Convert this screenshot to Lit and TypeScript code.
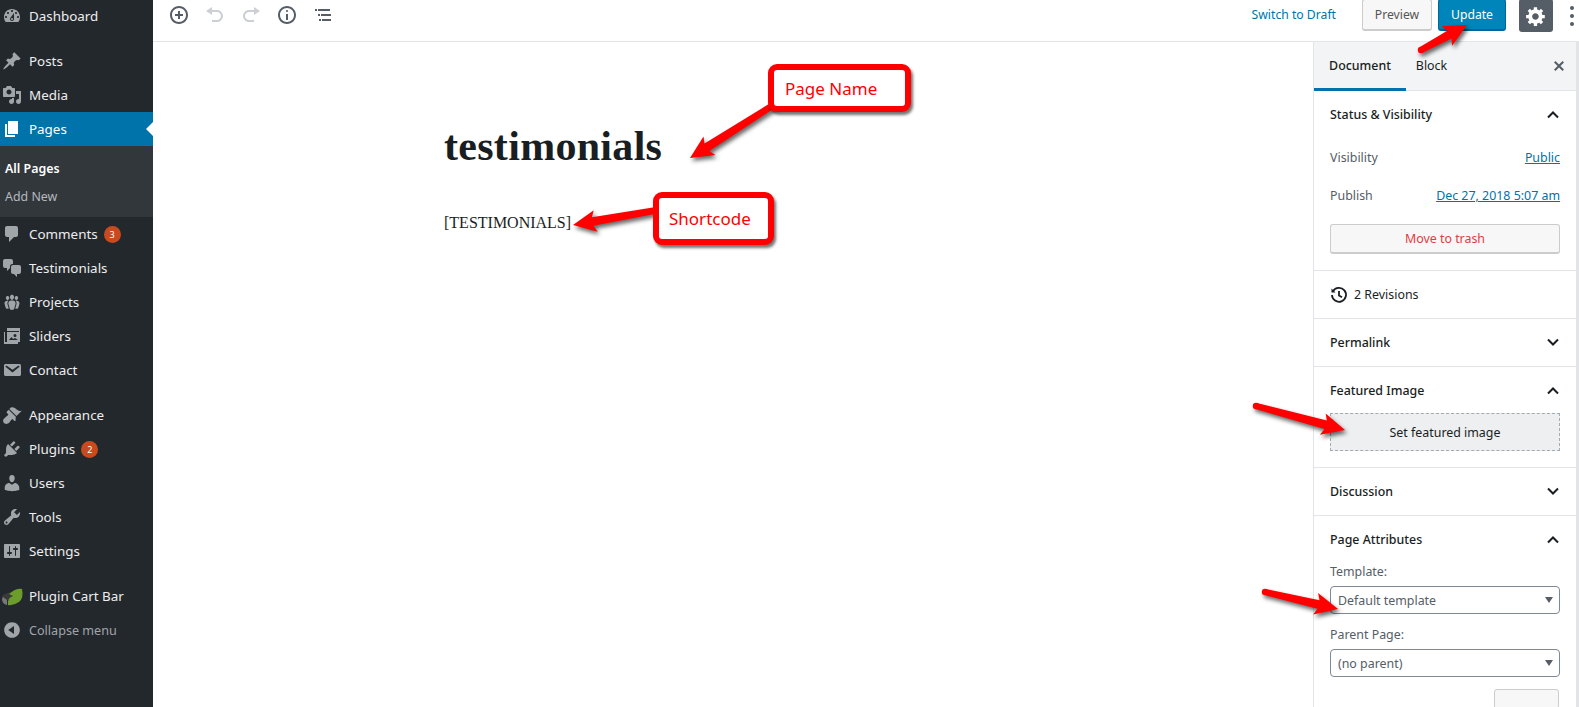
import { LitElement, html, css, svg } from "lit";
import { customElement } from "lit/decorators.js";

const P: Record<string, string> = {
  dashboard: "M3.76 16h12.48c1.1-1.37 1.76-3.11 1.76-5 0-4.42-3.58-8-8-8s-8 3.58-8 8c0 1.89.66 3.63 1.76 5zM10 4c.55 0 1 .45 1 1s-.45 1-1 1-1-.45-1-1 .45-1 1-1zM6 6c.55 0 1 .45 1 1s-.45 1-1 1-1-.45-1-1 .45-1 1-1zm8 0c.55 0 1 .45 1 1s-.45 1-1 1-1-.45-1-1 .45-1 1-1zm-5.37 5.55L12 7v6c0 1.1-.9 2-2 2s-2-.9-2-2c0-.57.24-1.08.63-1.45zM4 10c.55 0 1 .45 1 1s-.45 1-1 1-1-.45-1-1 .45-1 1-1zm12 0c.55 0 1 .45 1 1s-.45 1-1 1-1-.45-1-1 .45-1 1-1zm-5 3c0-.55-.45-1-1-1s-1 .45-1 1 .45 1 1 1 1-.45 1-1z",
  post: "M10.44 3.02l1.82-1.82 6.36 6.35-1.83 1.82c-1.05-.68-2.48-.57-3.41.36l-.75.75c-.92.93-1.04 2.35-.35 3.41l-1.83 1.82-2.41-2.41-2.8 2.79c-.42.42-3.38 2.71-3.8 2.29s1.86-3.39 2.28-3.81l2.79-2.79L4.1 9.36l1.83-1.82c1.05.69 2.48.57 3.4-.36l.75-.75c.93-.92 1.05-2.35.36-3.41z",
  media: "M13 11V4c0-.55-.45-1-1-1h-1.67L9 1H5L3.67 3H2c-.55 0-1 .45-1 1v7c0 .55.45 1 1 1h10c.55 0 1-.45 1-1zM7 4.5c1.38 0 2.5 1.12 2.5 2.5S8.38 9.5 7 9.5 4.5 8.38 4.5 7 5.62 4.5 7 4.5zM14 6h5v10.5c0 1.38-1.12 2.5-2.5 2.5S14 17.88 14 16.5s1.12-2.5 2.5-2.5c.17 0 .34.02.5.05V9h-3V6zm-4 8.05V13h2v3.5c0 1.38-1.12 2.5-2.5 2.5S7 17.88 7 16.5 8.12 14 9.5 14c.17 0 .34.02.5.05z",
  page: "M6 15V2h10v13H6zm-1 1h8v2H3V5h2v11z",
  comment: "M5 2h9c1.1 0 2 .9 2 2v7c0 1.1-.9 2-2 2h-2l-5 5v-5H5c-1.1 0-2-.9-2-2V4c0-1.1.9-2 2-2z",
  chat: "M11 6h-.82C9.07 6 8 7.2 8 8.16V10l-3 3v-3H3c-1.1 0-2-.9-2-2V3c0-1.1.9-2 2-2h6c1.1 0 2 .9 2 2v3zm0 1h6c1.1 0 2 .9 2 2v5c0 1.1-.9 2-2 2h-2v3l-3-3h-1c-1.1 0-2-.9-2-2V9c0-1.1.9-2 2-2z",
  groups: "M8.03 4.46c-.29 1.28.55 3.46 1.97 3.46 1.41 0 2.25-2.18 1.96-3.46-.22-.98-1.08-1.63-1.96-1.63-.89 0-1.74.65-1.97 1.63zm-4.13.9c-.25 1.08.47 2.93 1.67 2.93s1.92-1.85 1.67-2.93c-.19-.83-.92-1.39-1.67-1.39s-1.48.56-1.67 1.39zm8.86 0c-.25 1.08.47 2.93 1.66 2.93 1.2 0 1.92-1.85 1.67-2.93-.19-.83-.92-1.39-1.67-1.39-.74 0-1.47.56-1.66 1.39zm-.59 11.43l1.25-4.3C14.2 10 12.71 8.47 10 8.47c-2.72 0-4.21 1.53-3.44 4.02l1.26 4.3C8.05 17.51 9 18 10 18c.98 0 1.94-.49 2.17-1.21zm-6.1-7.63c-.49.67-.96 1.83-.42 3.59l1.12 3.79c-.34.2-.77.31-1.2.31-.85 0-1.65-.41-1.85-1.03l-1.07-3.65c-.65-2.11.61-3.4 2.92-3.4.27 0 .54.02.79.06-.1.1-.2.22-.29.33zm8.35-.39c2.31 0 3.58 1.29 2.92 3.4l-1.07 3.65c-.2.62-1 1.03-1.85 1.03-.43 0-.86-.11-1.2-.31l1.11-3.79c.55-1.76.08-2.92-.42-3.59-.09-.11-.19-.23-.28-.33.25-.04.51-.06.79-.06z",
  slides: "M5 2h13v11h-1V5H5V2zM2 6h1v10h13v2H2V6zm3 0h13v10H5V6zm8 2a1.5 1.5 0 1 0 0 3 1.5 1.5 0 0 0 0-3zM7 14h9l-3-2-2 1-1.5-2z",
  email: "M3.87 4h13.25C18.37 4 19 4.59 19 5.79v8.42c0 1.19-.63 1.79-1.88 1.79H3.87c-1.25 0-1.88-.6-1.88-1.79V5.79c0-1.2.63-1.79 1.88-1.79zm6.62 8.6l6.74-5.53c.24-.2.43-.66.13-1.07-.29-.41-.82-.42-1.17-.17l-5.7 3.86L4.8 5.83c-.35-.25-.88-.24-1.17.17-.3.41-.11.87.13 1.07z",
  appearance: "M14.48 11.06L7.41 3.99l1.5-1.5c.5-.56 2.3-.47 3.51.32 1.21.8 1.43 1.28 2.91 2.1 1.18.64 2.45 1.26 4.45.85zm-.71.71L6.7 4.7 4.93 6.47c-.39.39-.39 1.02 0 1.41l1.06 1.06c.39.39.39 1.03 0 1.42-.6.6-1.43 1.11-2.21 1.69-.35.26-.7.53-1.01.84C1.43 13.71.96 15.18 1.2 16.4c.07.4.21.79.43 1.15.63 1.03 1.69 1.34 2.71 1.35.92.01 1.97-.26 2.77-1.06.31-.31.58-.66.84-1.01.58-.78 1.09-1.61 1.69-2.21.39-.39 1.03-.39 1.42 0l1.06 1.06c.39.39 1.02.39 1.41 0z",
  plugins: "M13.11 4.36L9.87 7.6 8 5.73l3.24-3.24c.35-.34 1.05-.2 1.56.32.52.51.66 1.21.31 1.55zm-8 1.77l.91-1.12 9.01 9.01-1.19.84c-.71.71-2.63 1.16-3.82 1.16H6.14L4.9 17.26c-.59.59-1.54.59-2.12 0-.59-.58-.59-1.53 0-2.12l1.24-1.24v-3.88c0-1.13.4-3.19 1.09-3.89zm7.26 3.97l3.24-3.24c.34-.35 1.04-.21 1.55.31.52.51.66 1.21.31 1.55l-3.24 3.25z",
  users: "M10 9.25c-2.27 0-2.73-3.44-2.73-3.44C7 4.02 7.82 2 9.97 2c2.16 0 2.98 2.02 2.71 3.81 0 0-.41 3.44-2.68 3.44zm0 2.57L12.72 10c2.39 0 4.52 2.33 4.52 4.53v2.49s-3.65 1.13-7.24 1.13c-3.65 0-7.24-1.13-7.24-1.13v-2.49c0-2.25 1.94-4.48 4.47-4.48z",
  tools: "M16.68 9.77c-1.34 1.34-3.3 1.67-4.95.99l-5.41 6.52c-.99.99-2.59.99-3.58 0s-.99-2.59 0-3.57l6.52-5.42c-.68-1.65-.35-3.61.99-4.95 1.28-1.28 3.12-1.62 4.72-1.06l-2.89 2.89 2.82 2.82 2.86-2.87c.53 1.58.18 3.39-1.08 4.67zM3.81 16.21c.4.39 1.04.39 1.43 0 .4-.4.4-1.04 0-1.43-.39-.4-1.03-.4-1.43 0-.39.39-.39 1.03 0 1.43z",
  settings: "M18 16V4c0-.55-.45-1-1-1H3c-.55 0-1 .45-1 1v12c0 .55.45 1 1 1h14c.55 0 1-.45 1-1zM8 11h1c.55 0 1 .45 1 1s-.45 1-1 1H8v1.5c0 .28-.22.5-.5.5s-.5-.22-.5-.5V13H6c-.55 0-1-.45-1-1s.45-1 1-1h1V5.5c0-.28.22-.5.5-.5s.5.22.5.5V11zm5-2h-1c-.55 0-1-.45-1-1s.45-1 1-1h1V5.5c0-.28.22-.5.5-.5s.5.22.5.5V7h1c.55 0 1 .45 1 1s-.45 1-1 1h-1v5.5c0 .28-.22.5-.5.5s-.5-.22-.5-.5V9z",
  collapse: "M10 2.16c4.33 0 7.84 3.51 7.84 7.84s-3.51 7.84-7.84 7.84S2.16 14.33 2.16 10 5.71 2.16 10 2.16zm2 11.72V6.12L6.18 9.97z",
  inserter: "M10 1c-5 0-9 4-9 9s4 9 9 9 9-4 9-9-4-9-9-9zm0 16c-3.9 0-7-3.1-7-7s3.1-7 7-7 7 3.1 7 7-3.1 7-7 7zm1-11H9v3H6v2h3v3h2v-3h3V9h-3V6z",
  undo: "M12 5H7V2L1 6l6 4V7h5c2.2 0 4 1.8 4 4s-1.8 4-4 4H7v2h5c3.3 0 6-2.7 6-6s-2.7-6-6-6z",
  redo: "M8 5h5V2l6 4-6 4V7H8c-2.2 0-4 1.8-4 4s1.8 4 4 4h5v2H8c-3.3 0-6-2.7-6-6s2.7-6 6-6z",
  info: "M9 15h2V9H9v6zm1-10c-.5 0-1 .5-1 1s.5 1 1 1 1-.5 1-1-.5-1-1-1zm0-4c-5 0-9 4-9 9s4 9 9 9 9-4 9-9-4-9-9-9zm0 16c-3.9 0-7-3.1-7-7s3.1-7 7-7 7 3.1 7 7-3.1 7-7 7z",
  toc: "M2 4h2v2H2zM5 4h12v2H5zM5 9h2v2H5zM8 9h10v2H8zM6 14h2v2H6zM9 14h9v2H9z",
  gear: "M18 12h-2.18c-.17.7-.44 1.35-.81 1.93l1.54 1.54-2.1 2.1-1.54-1.54c-.58.36-1.23.63-1.91.79V19H8v-2.18c-.68-.16-1.33-.43-1.91-.79l-1.54 1.54-2.12-2.12 1.54-1.54c-.36-.58-.63-1.23-.79-1.91H1V9.03h2.17c.16-.7.44-1.35.8-1.94L2.43 5.55l2.1-2.1 1.54 1.54c.58-.37 1.24-.64 1.93-.81V2h3v2.18c.68.16 1.33.43 1.91.79l1.54-1.54 2.12 2.12-1.54 1.54c.36.59.64 1.24.8 1.94H18V12zm-8.5 1.5c1.66 0 3-1.34 3-3s-1.34-3-3-3-3 1.34-3 3 1.34 3 3 3z",
  close: "M14.95 6.46L11.41 10l3.54 3.54-1.41 1.41L10 11.41l-3.54 3.54-1.41-1.41L8.59 10 5.05 6.46l1.41-1.41L10 8.59l3.54-3.54z",
};

const ico = (name: string, size = 20) => html`<svg class="i" width=${size} height=${size} viewBox="0 0 20 20" fill="currentColor"><path d=${P[name]}></path></svg>`;

type Item = { label: string; icon: string; badge?: number; sepBefore?: boolean };
const itemsA: Item[] = [
  { label: "Posts", icon: "post", sepBefore: true },
  { label: "Media", icon: "media" },
];
const itemsB: Item[] = [
  { label: "Comments", icon: "comment", badge: 3 },
  { label: "Testimonials", icon: "chat" },
  { label: "Projects", icon: "groups" },
  { label: "Sliders", icon: "slides" },
  { label: "Contact", icon: "email" },
  { label: "Appearance", icon: "appearance", sepBefore: true },
  { label: "Plugins", icon: "plugins", badge: 2 },
  { label: "Users", icon: "users" },
  { label: "Tools", icon: "tools" },
  { label: "Settings", icon: "settings" },
];

function arrow(x1: number, y1: number, x2: number, y2: number) {
  const a = Math.atan2(y2 - y1, x2 - x1);
  const c = Math.cos(a), s = Math.sin(a);
  const at = (d: number, w: number) => `${x2 - c * d - s * w},${y2 - s * d + c * w}`;
  const len = 20, hw = 11;
  const tail = 3.2, neck = 4.4;
  const sx = x1, sy = y1;
  const pts = [
    at(0, 0), at(len + 3, hw), at(len, neck),
    `${sx - s * tail},${sy + c * tail}`, `${sx + s * tail},${sy - c * tail}`,
    at(len, -neck), at(len + 3, -hw),
  ].join(" ");
  return svg`<circle cx=${sx} cy=${sy} r=${tail} fill="#f00"></circle><polygon points=${pts} fill="#f00"></polygon>`;
}

@customElement("app-root")
export class AppRoot extends LitElement {
  static styles = css`
    :host { display: block; height: 707px; overflow: hidden; position: relative; background: #fff; font-family: "Noto Sans", "Open Sans", sans-serif; font-size: 13px; color: #191e23; }
    * { box-sizing: border-box; }
    .i { display: block; flex: none; }
    .shell { display: grid; grid-template-columns: 153px 1fr; height: 707px; }

    .side { background: #23282d; color: #eee; margin-top: -1px; height: 708px; font-size: 13.4px; }
    .item { display: flex; align-items: center; height: 34px; position: relative; }
    .item.sep { margin-top: 11px; }
    .item .ic { width: 29px; padding-left: 2px; color: #a0a5aa; flex: none; }
    .item.cur { background: #0073aa; color: #fff; }
    .item.cur .ic { color: #fff; }
    .item.cur::after { content: ""; position: absolute; right: 0; top: 10px; border: 7px solid transparent; border-right-color: #fff; border-left: 0; }
    .sub { background: #32373c; height: 71px; padding: 9px 0 0 5px; font-size: 12.4px; color: #b4b9be; }
    .sub div { height: 28px; line-height: 28px; }
    .sub .on { color: #fff; font-weight: 600; }
    .badge { width: 17px; height: 17px; border-radius: 50%; background: #ca4a1f; color: #fff; font-size: 9px; display: flex; align-items: center; justify-content: center; margin-left: 6px; }
    .muted { color: #a0a5aa; font-size: 12.6px; }
    .muted .ic { color: #a0a5aa; }

    .main { display: flex; flex-direction: column; min-width: 0; height: 707px; }
    .top { height: 43px; flex: none; border-bottom: 1px solid #e2e4e7; display: flex; align-items: flex-start; padding-left: 16px; margin-top: -1px; }
    .tools { display: flex; align-items: center; height: 32px; color: #555d66; gap: 16px; }
    .tools .off { color: #ccd0d4; }
    .tools .i { width: 20px; height: 20px; }
    .right { margin-left: auto; display: flex; align-items: flex-start; }
    .draft { color: #0073aa; font-size: 12.2px; line-height: 32px; margin-right: 26px; }
    .btn { height: 32px; display: flex; align-items: center; justify-content: center; border-radius: 3px; font-size: 12.2px; }
    .preview { width: 70px; margin-right: 6px; border: 1px solid #ccc; border-bottom-width: 2px; background: #f7f7f7; color: #555; }
    .update { width: 68px; background: #0085ba; color: #fff; border: 1px solid #006799; border-bottom-width: 2px; margin-right: 13px; }
    .gear { width: 34px; height: 33px; background: #555d66; color: #fff; margin-right: 12px; }
    .dots { width: 14px; display: flex; flex-direction: column; gap: 4px; padding-top: 7px; align-items: center; margin-right: 0; }
    .dots i { width: 4px; height: 4px; border-radius: 50%; background: #555d66; display: block; }

    .body { flex: 1; display: flex; min-height: 0; }
    .doc { flex: 1; min-width: 0; padding: 0 0 0 291px; }
    .doc h1 { margin: 77px 0 0; font: 700 42px/54px "Liberation Serif", serif; color: #191e23; letter-spacing: .3px; }
    .doc p { margin: 38px 0 0; font: 16px/24px "Liberation Serif", serif; color: #191e23; }

    .panel { width: 266px; flex: none; border-left: 1px solid #e2e4e7; border-right: 3px solid #e2e4e7; overflow: hidden; }
    .tabs { height: 49px; background: #f3f4f5; border-bottom: 1px solid #e2e4e7; display: flex; align-items: stretch; position: relative; }
    .tab { display: flex; align-items: center; justify-content: center; font-size: 12.4px; padding-bottom: 2px; }
    .tab.on { width: 92px; border-bottom: 3px solid #0073aa; font-weight: 500; padding-bottom: 0; margin-bottom: -1px; }
    .tab.off { width: 47px; margin-left: 0; padding-left: 4px; }
    .x { margin-left: auto; margin-right: 7px; align-self: center; color: #555d66; }
    .sec { border-bottom: 1px solid #e2e4e7; padding: 0 16px; }
    .head { display: flex; align-items: center; justify-content: space-between; height: 47px; font-weight: 500; font-size: 12.4px; }
    .head svg { flex: none; }
    .row { display: flex; justify-content: space-between; align-items: center; height: 38px; color: #555d66; font-size: 12.4px; }
    .row a { color: #0073aa; text-decoration: underline; }
    .trash { height: 30px; margin-top: 10px; margin-bottom: 16px; border: 1px solid #ccc; border-bottom-width: 2px; border-radius: 3px; background: #f7f7f7; color: #d9423f; font-size: 12.4px; display: flex; align-items: center; justify-content: center; }
    .rev { height: 47px; display: flex; align-items: center; gap: 6px; font-size: 12.4px; }
    .feat { height: 38px; margin-bottom: 16px; background: #edeff0; border: 1px dashed #a2aab2; display: flex; align-items: center; justify-content: center; font-size: 12.4px; margin-top: -1px; }
    .lab { color: #555d66; font-size: 12.4px; line-height: 18px; }
    .sel { height: 28px; margin: 5px 0 12px; width: 230px; border: 1px solid #7e8993; border-radius: 4px; display: flex; align-items: center; justify-content: space-between; padding: 0 6px 0 7px; color: #555d66; font-size: 12.4px; }
    .sel i { width: 0; height: 0; border: 4px solid transparent; border-top: 6px solid #555d66; border-bottom: 0; }
    .small { width: 65px; height: 20px; margin: 10px 0 0 164px; border: 1px solid #ccc; border-radius: 3px; background: #f7f7f7; }

    .layer { position: absolute; inset: 0; pointer-events: none; }
    .layer svg { position: absolute; left: 0; top: 0; filter: drop-shadow(2px 3px 2px rgba(0,0,0,.6)); }
    .call { position: absolute; background: #fff; border: 6px solid #f00; border-radius: 9px; color: #f00; font-size: 17px; display: flex; align-items: center; box-shadow: 2px 3px 3px rgba(0,0,0,.55); }
    .c1 { left: 768px; top: 64px; width: 143px; height: 48px; padding-left: 11px; }
    .c2 { left: 653px; top: 192px; width: 121px; height: 53px; padding-left: 10px; }
  `;

  private chev(up: boolean) {
    return html`<svg width="14" height="9" viewBox="0 0 14 9" fill="none" stroke="#191e23" stroke-width="2"><polyline points=${up ? "2,7.5 7,2.5 12,7.5" : "2,1.5 7,6.5 12,1.5"}></polyline></svg>`;
  }

  private item(it: Item) {
    return html`<div class="item ${it.sepBefore ? "sep" : ""}"><span class="ic">${ico(it.icon)}</span><span>${it.label}</span>${it.badge ? html`<span class="badge">${it.badge}</span>` : ""}</div>`;
  }

  render() {
    return html`
      <div class="shell">
        <nav class="side">
          <div class="item"><span class="ic">${ico("dashboard")}</span><span>Dashboard</span></div>
          ${itemsA.map((i) => this.item(i))}
          <div class="item cur"><span class="ic">${ico("page")}</span><span>Pages</span></div>
          <div class="sub"><div class="on">All Pages</div><div>Add New</div></div>
          ${itemsB.map((i) => this.item(i))}
          <div class="item sep">
            <span class="ic"><svg class="i" width="23" height="20" viewBox="0 0 23 20" style="margin-left:-1px">
              <path d="M1 10 Q9 4 11 8 L12 13 L2 15 Z" fill="#3a3a3a"></path>
              <path d="M1 13 Q1 18 6 19 L6 14 L2 11 Z" fill="#777"></path>
              <path d="M8 8 Q15 2 21 3 Q23 12 18 16 Q12 20 7 19 Q6 12 12 10 Z" fill="#6b9c2c"></path>
            </svg></span><span>Plugin Cart Bar</span>
          </div>
          <div class="item muted"><span class="ic">${ico("collapse")}</span><span>Collapse menu</span></div>
        </nav>
        <div class="main">
          <header class="top">
            <div class="tools">
              ${ico("inserter")}
              <span class="off">${ico("undo")}</span>
              <span class="off">${ico("redo")}</span>
              ${ico("info")}
              ${ico("toc")}
            </div>
            <div class="right">
              <span class="draft">Switch to Draft</span>
              <div class="btn preview">Preview</div>
              <div class="btn update">Update</div>
              <div class="btn gear">${ico("gear", 22)}</div>
              <div class="dots"><i></i><i></i><i></i></div>
            </div>
          </header>
          <div class="body">
            <div class="doc">
              <h1>testimonials</h1>
              <p>[TESTIMONIALS]</p>
            </div>
            <aside class="panel">
              <div class="tabs">
                <div class="tab on">Document</div>
                <div class="tab off">Block</div>
                <span class="x">${ico("close")}</span>
              </div>
              <section class="sec">
                <div class="head"><span>Status &amp; Visibility</span>${this.chev(true)}</div>
                <div class="row"><span>Visibility</span><a>Public</a></div>
                <div class="row"><span>Publish</span><a>Dec 27, 2018 5:07 am</a></div>
                <div class="trash">Move to trash</div>
              </section>
              <section class="sec">
                <div class="rev">
                  <svg width="18" height="18" viewBox="0 0 18 18" fill="none" stroke="#191e23" stroke-width="1.8"><path d="M3 5.2A7 7 0 1 1 2 9"></path><path d="M9 5v4.4l3 1.8"></path><path d="M1.5 2.5v4h4" fill="#191e23" stroke="none"></path></svg>
                  <span>2 Revisions</span>
                </div>
              </section>
              <section class="sec"><div class="head"><span>Permalink</span>${this.chev(false)}</div></section>
              <section class="sec">
                <div class="head"><span>Featured Image</span>${this.chev(true)}</div>
                <div class="feat">Set featured image</div>
              </section>
              <section class="sec"><div class="head"><span>Discussion</span>${this.chev(false)}</div></section>
              <section class="sec">
                <div class="head"><span>Page Attributes</span>${this.chev(true)}</div>
                <div class="lab">Template:</div>
                <div class="sel"><span>Default template</span><i></i></div>
                <div class="lab">Parent Page:</div>
                <div class="sel"><span>(no parent)</span><i></i></div>
                <div class="small"></div>
              </section>
            </aside>
          </div>
        </div>
      </div>
      <div class="layer">
        <svg width="1579" height="707" viewBox="0 0 1579 707">
          ${arrow(775, 104, 690, 158)}
          ${arrow(658, 210, 573, 225)}
          ${arrow(1421, 50, 1467, 25)}
          ${arrow(1256, 406, 1345, 430)}
          ${arrow(1265, 592, 1338, 609)}
        </svg>
        <div class="call c1">Page Name</div>
        <div class="call c2">Shortcode</div>
      </div>
    `;
  }
}
